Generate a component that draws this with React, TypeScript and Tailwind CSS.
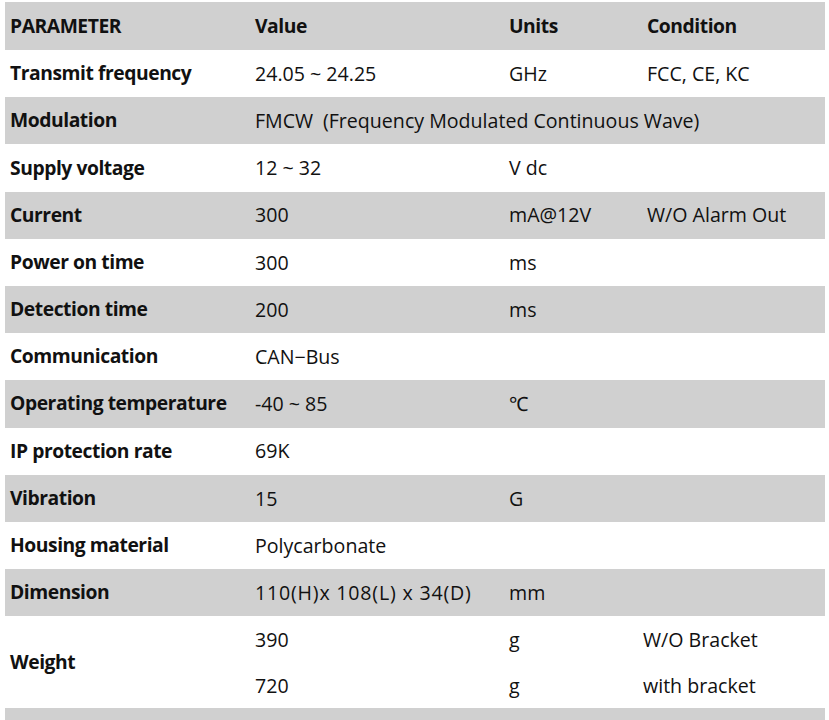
import React from "react";

type Row = { p: string; v?: string; u?: string; c?: string; span?: boolean; wide?: boolean };

const rows: Row[] = [
  { p: "Transmit frequency", v: "24.05 ~ 24.25", u: "GHz", c: "FCC, CE, KC" },
  { p: "Modulation", v: "FMCW\u2002(Frequency Modulated Continuous Wave)", span: true },
  { p: "Supply voltage", v: "12 ~ 32", u: "V dc" },
  { p: "Current", v: "300", u: "mA@12V", c: "W/O Alarm Out" },
  { p: "Power on time", v: "300", u: "ms" },
  { p: "Detection time", v: "200", u: "ms" },
  { p: "Communication", v: "CAN\u2212Bus" },
  { p: "Operating temperature", v: "-40 ~ 85", u: "℃" },
  { p: "IP protection rate", v: "69K" },
  { p: "Vibration", v: "15", u: "G" },
  { p: "Housing material", v: "Polycarbonate" },
  { p: "Dimension", v: "110(H)x 108(L) x 34(D)", u: "mm", wide: true },
];

const grid = "grid grid-cols-[245px_254px_138px_1fr]";
const bold = "font-bold text-[19.3px] tracking-[-0.45px]";

export default function App() {
  return (
    <div
      className="w-[829px] h-[720px] bg-white overflow-hidden pt-[2px] pl-[5px] text-[#111] text-[19.6px]"
      style={{ fontFamily: '"Open Sans", "Noto Sans", sans-serif' }}
    >
      <div className="w-[820px]">
        <div className={`${grid} h-[48px] items-center bg-[#d0d0d0] ${bold}`}>
          <div className="pl-[5px]">PARAMETER</div>
          <div className="pl-[5px]">Value</div>
          <div className="pl-[5px]">Units</div>
          <div className="pl-[5px]">Condition</div>
        </div>
        {rows.map((r, i) => (
          <div
            key={r.p}
            className={`${grid} h-[47.2px] items-center ${i % 2 === 1 ? "bg-[#d0d0d0]" : "bg-white"}`}
          >
            <div className={`pl-[5px] whitespace-nowrap ${bold}`}>{r.p}</div>
            {r.span ? (
              <div className="pl-[5px] col-span-3 whitespace-nowrap">{r.v}</div>
            ) : (
              <>
                <div className={`pl-[5px] whitespace-nowrap ${r.wide ? "tracking-[0.8px]" : ""}`}>{r.v}</div>
                <div className="pl-[5px]">{r.u}</div>
                <div className="pl-[5px]">{r.c}</div>
              </>
            )}
          </div>
        ))}
        <div className={`${grid} h-[92px] items-center bg-white`}>
          <div className={`pl-[5px] ${bold}`}>Weight</div>
          <div className="col-span-3 grid grid-cols-[254px_138px_1fr] grid-rows-2 h-full items-center">
            <div className="pl-[5px]">390</div>
            <div className="pl-[5px]">g</div>
            <div className="pl-[1px]">W/O Bracket</div>
            <div className="pl-[5px]">720</div>
            <div className="pl-[5px]">g</div>
            <div className="pl-[1px]">with bracket</div>
          </div>
        </div>
        <div className="h-[20px] bg-[#d0d0d0]" />
      </div>
    </div>
  );
}
